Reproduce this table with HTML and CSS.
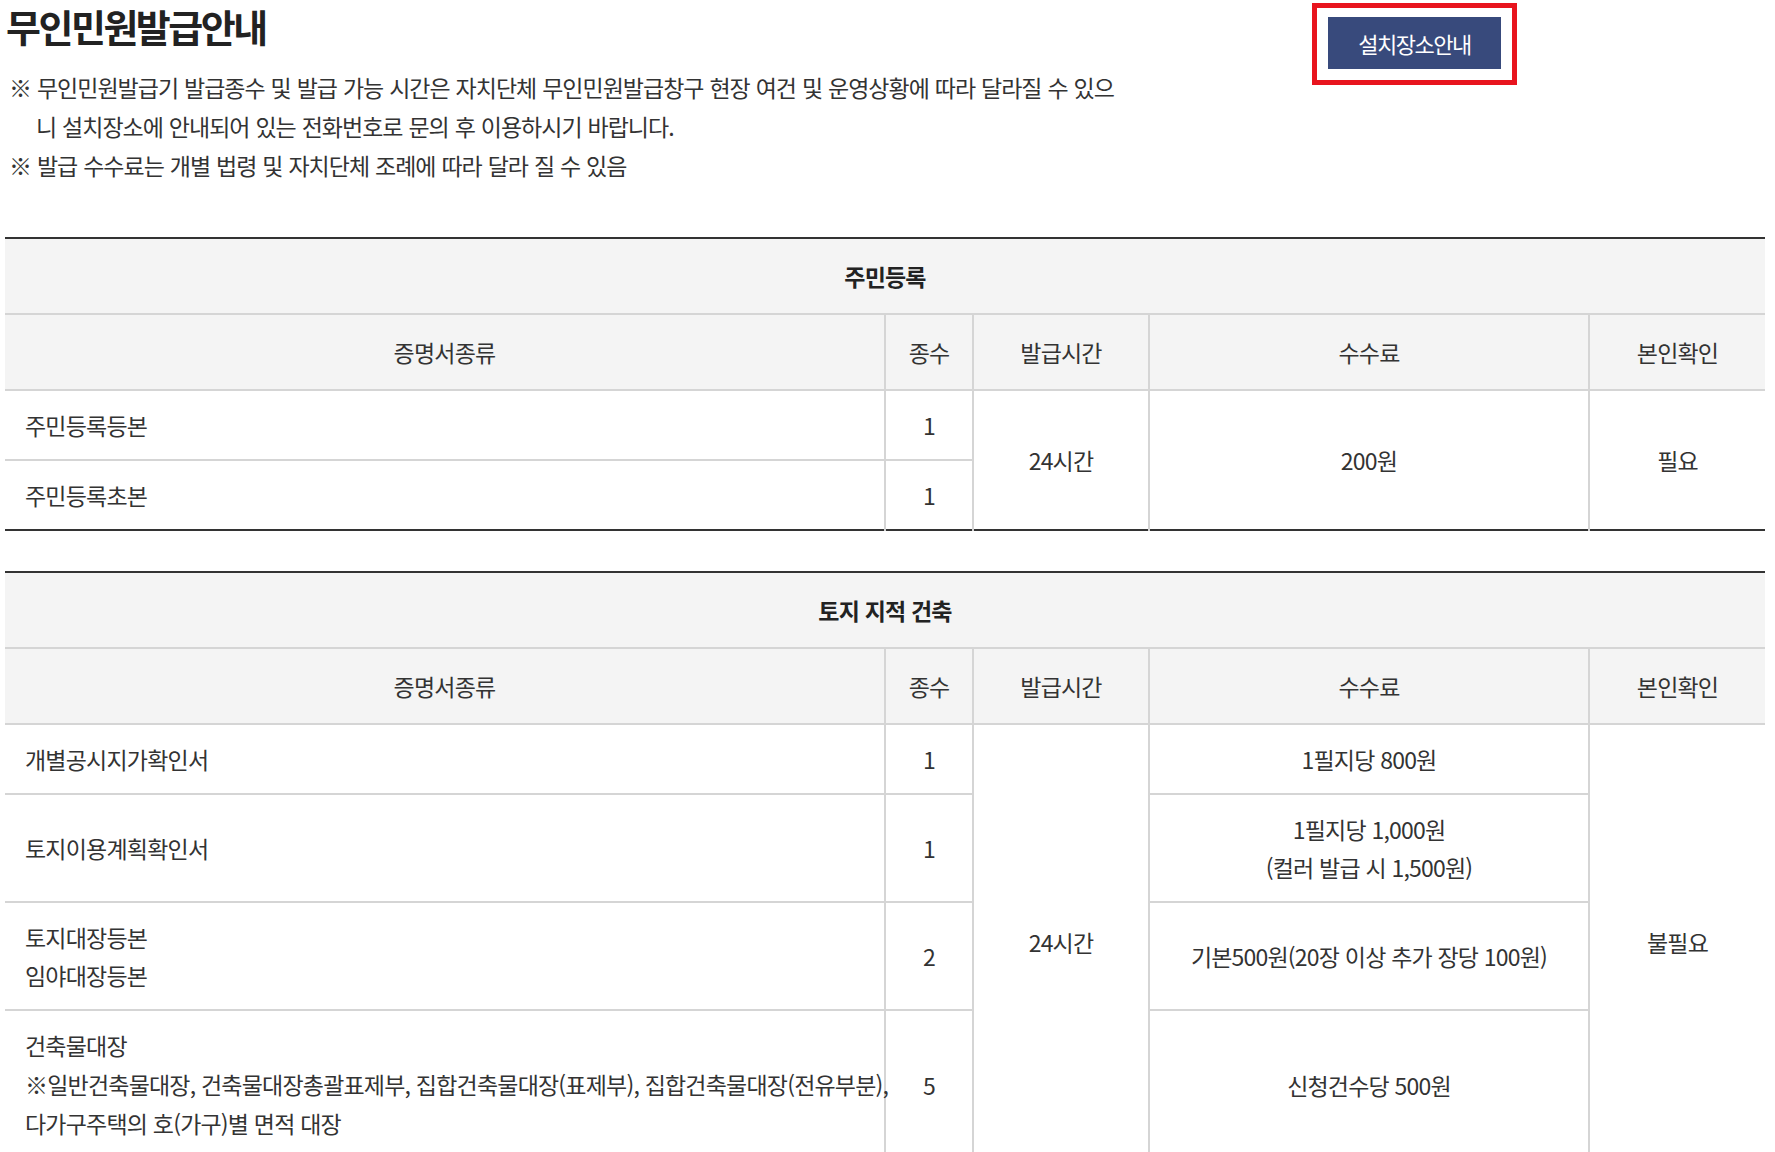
FILE: index.html
```html
<!DOCTYPE html>
<html lang="ko">
<head>
<meta charset="utf-8">
<title>무인민원발급안내</title>
<link rel="stylesheet" href="styles.css">
</head>
<body>
<div class="page">
  <div class="intro">
    <div class="intro-text">
      <h1 class="title">무인민원발급안내</h1>
      <ul class="notes">
        <li>※ 무인민원발급기 발급종수 및 발급 가능 시간은 자치단체 무인민원발급창구 현장 여건 및 운영상황에 따라 달라질 수 있으<br>니 설치장소에 안내되어 있는 전화번호로 문의 후 이용하시기 바랍니다.</li>
        <li>※ 발급 수수료는 개별 법령 및 자치단체 조례에 따라 달라 질 수 있음</li>
      </ul>
    </div>
    <div class="highlight">
      <a class="btn" href="#">설치장소안내</a>
    </div>
  </div>

  <table class="fee-table">
    <colgroup>
      <col class="c1"><col class="c2"><col class="c3"><col class="c4"><col class="c5">
    </colgroup>
    <thead>
      <tr><th class="group" colspan="5">주민등록</th></tr>
      <tr><th>증명서종류</th><th>종수</th><th>발급시간</th><th>수수료</th><th>본인확인</th></tr>
    </thead>
    <tbody>
      <tr><td class="name">주민등록등본</td><td>1</td><td rowspan="2">24시간</td><td rowspan="2">200원</td><td rowspan="2">필요</td></tr>
      <tr><td class="name">주민등록초본</td><td>1</td></tr>
    </tbody>
  </table>

  <table class="fee-table">
    <colgroup>
      <col class="c1"><col class="c2"><col class="c3"><col class="c4"><col class="c5">
    </colgroup>
    <thead>
      <tr><th class="group" colspan="5">토지 지적 건축</th></tr>
      <tr><th>증명서종류</th><th>종수</th><th>발급시간</th><th>수수료</th><th>본인확인</th></tr>
    </thead>
    <tbody>
      <tr><td class="name">개별공시지가확인서</td><td>1</td><td rowspan="4">24시간</td><td>1필지당 800원</td><td rowspan="4">불필요</td></tr>
      <tr><td class="name">토지이용계획확인서</td><td>1</td><td>1필지당 1,000원<br>(컬러 발급 시 1,500원)</td></tr>
      <tr><td class="name">토지대장등본<br>임야대장등본</td><td>2</td><td>기본500원(20장 이상 추가 장당 100원)</td></tr>
      <tr><td class="name nowrap">건축물대장<br>※일반건축물대장, 건축물대장총괄표제부, 집합건축물대장(표제부), 집합건축물대장(전유부분),<br>다가구주택의 호(가구)별 면적 대장</td><td>5</td><td>신청건수당 500원</td></tr>
    </tbody>
  </table>
</div>
</body>
</html>
```

FILE: styles.css
```css
html, body {
  margin: 0;
  padding: 0;
  background: #ffffff;
}

body {
  font-family: "Noto Sans CJK KR", "Noto Sans", sans-serif;
  color: #333333;
  font-size: 23px;
  letter-spacing: -0.8px;
}

.page {
  padding: 0 0 0 5px;
  width: 1760px;
}

.intro {
  display: flex;
  justify-content: space-between;
  align-items: flex-start;
  width: 1512px;
}

.title {
  margin: 0;
  font-size: 38px;
  line-height: 52px;
  font-weight: 700;
  letter-spacing: -2.5px;
  color: #222222;
  padding-left: 1px;
}

.notes {
  list-style: none;
  margin: 16px 0 0 0;
  padding: 0 0 0 31px;
  line-height: 39px;
  letter-spacing: -1px;
  word-spacing: 0.5px;
}

.notes li {
  text-indent: -27px;
}

.highlight {
  margin-top: 3px;
  border: 5px solid #e8141e;
  padding: 9px 11px 11px 11px;
}

.btn {
  display: flex;
  align-items: center;
  justify-content: center;
  width: 173px;
  height: 52px;
  background: #384a7c;
  color: #ffffff;
  text-decoration: none;
  font-size: 22px;
  letter-spacing: -1.5px;
}

.fee-table {
  width: 1760px;
  table-layout: fixed;
  border-collapse: collapse;
  border-top: 2px solid #333333;
  border-bottom: 2px solid #333333;
  margin-top: 52px;
}

.fee-table + .fee-table {
  margin-top: 40px;
}

.c1 { width: 50%; }
.c2 { width: 5%; }
.c3 { width: 10%; }
.c4 { width: 25%; }
.c5 { width: 10%; }

.fee-table th,
.fee-table td {
  border: none;
  border-top: 2px solid #d5d5d5;
  border-left: 2px solid #d5d5d5;
  text-align: center;
  vertical-align: middle;
  line-height: 38px;
  font-weight: 400;
}

.fee-table tr > :first-child { border-left: none; }
.fee-table th.group { border-top: none; }

.fee-table th {
  background: #f4f4f4;
  padding: 18px 0;
  color: #333333;
}

.fee-table th.group {
  font-weight: 700;
  color: #222222;
}

.fee-table td {
  padding: 15px 0;
  background: #ffffff;
}

.fee-table td.name {
  text-align: left;
  padding-left: 20px;
}

.fee-table td.nowrap {
  white-space: nowrap;
  line-height: 39px;
}
```
